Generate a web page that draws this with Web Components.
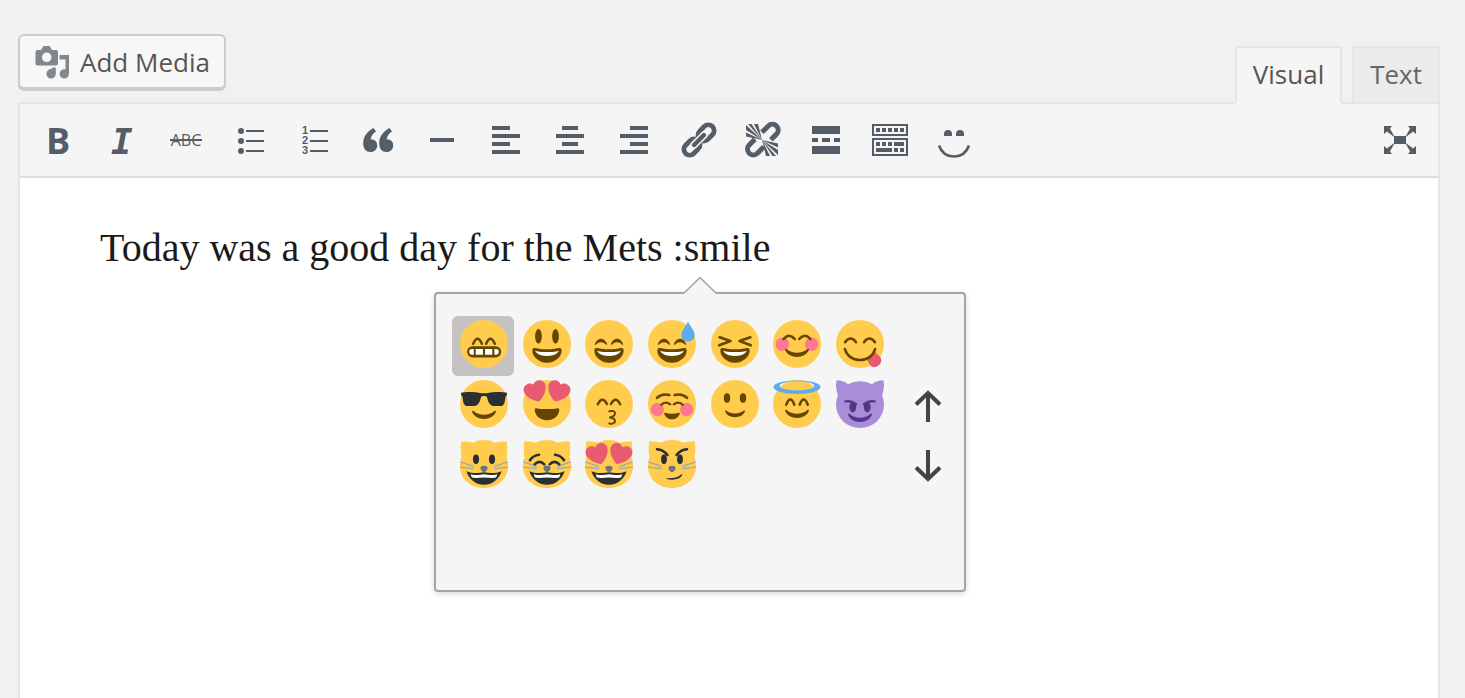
<!DOCTYPE html>
<html lang="en">
<head>
<meta charset="utf-8">
<title>Edit Post</title>
<style>
  body { margin: 0; background: #f1f1f1; font-family: "Open Sans", "Noto Sans", sans-serif; color: #555; }
</style>
</head>
<body>
<post-editor>
  <media-button slot="media">Add Media</media-button>
  <editor-tab slot="tabs" active>Visual</editor-tab>
  <editor-tab slot="tabs">Text</editor-tab>
  <editor-toolbar slot="toolbar"></editor-toolbar>
  <editor-content slot="content">Today was a good day for the Mets :smile</editor-content>
</post-editor>

<script>
function define(name, html, setup) {
  customElements.define(name, class extends HTMLElement {
    connectedCallback() {
      if (this.shadowRoot) return;
      const root = this.attachShadow({ mode: 'open' });
      root.innerHTML = typeof html === 'function' ? html(this) : html;
      if (setup) setup(root, this);
    }
  });
}

/* Toolbar icons, 40 x 40 */
const lines = (xs) => xs.map(([x, w], i) => `<path d="M${x} ${6 + i * 8}h${w}v4h-${w}z"/>`).join('');
const ray = 'M20 20L4 12.500V16.500zM20 20L4 5V10zM20 20L6 4h3.500zM20 20L12 4h4z';
const comma = 'M15.500 8l2.500 3.500C14.500 13.500 12.900 17 12.700 19.700c3.700-.6 6.500 2 6.500 5.700 0 3.800-3 6.600-6.700 6.600-4.500 0-7.300-3.500-7.300-8.500C5.200 16.500 9.500 11 15.500 8z';
const arrow = 'M4 6h8l-2 2.800L15 17.500 6.800 11.500 4 14z';
const ICONS = {
  bold: '<text x="8" y="34" font-family="Open Sans" font-weight="700" font-size="36">B</text>',
  italic: '<text x="9" y="34" font-family="DejaVu Sans Mono" font-weight="700" font-style="italic" font-size="36">I</text>',
  strike: '<text x="20" y="26" text-anchor="middle" font-family="Open Sans" font-size="16">ABC</text><path d="M4 19h32v2H4z"/>',
  bullets: '<circle cx="11" cy="11" r="3"/><circle cx="11" cy="21" r="3"/><circle cx="11" cy="31" r="3"/><path d="M16 10h18v2H16zM16 20h18v2H16zM16 30h18v2H16z"/>',
  numbers: '<g font-family="Liberation Sans" font-weight="700" font-size="11"><text x="8" y="14">1</text><text x="8" y="24">2</text><text x="8" y="34">3</text></g><path d="M16 10h18v2H16zM16 20h18v2H16zM16 30h18v2H16z"/>',
  quote: `<path d="${comma}"/><path transform="translate(16)" d="${comma}"/>`,
  rule: '<path d="M8 18h24v4H8z"/>',
  left: lines([[6, 18], [6, 28], [6, 18], [6, 28]]),
  center: lines([[12, 16], [6, 28], [12, 16], [6, 28]]),
  right: lines([[16, 18], [6, 28], [16, 18], [6, 28]]),
  link: '<g transform="translate(21 20) rotate(-45)" fill="none" stroke="currentColor" stroke-width="4.800"><rect x="1" y="-5.800" width="18" height="11.600" rx="5.800"/><rect x="-19" y="-5.800" width="18" height="11.600" rx="5.800"/><path d="M-7 0H7" stroke="#f5f5f5" stroke-width="7.500" stroke-linecap="round"/><path d="M-7 0H7" stroke-width="4.400" stroke-linecap="round"/></g>',
  unlink: `<g transform="translate(21 19) rotate(-45)" fill="none" stroke="currentColor" stroke-width="5"><path d="M4-5.500H13a5.800 5.800 0 0 1 0 11.600H5"/><path d="M-6-5.500H-14a5.800 5.800 0 0 0 0 11.600H-5"/></g><path d="${ray}"/><path transform="rotate(180 20 20)" d="${ray}"/>`,
  more: '<path d="M6 6h28v8H6zM6 18h6v4H6zM16 18h8v4h-8zM28 18h6v4h-6zM6 26h28v8H6z"/>',
  kitchen: '<path fill="none" stroke="currentColor" stroke-width="2" d="M3 5h34v10H3zM3 19h34v16H3z"/><path d="M6 8h4v4H6zM12 8h4v4h-4zM18 8h4v4h-4zM24 8h4v4h-4zM30 8h4v4h-4zM6 22h4v4H6zM12 22h4v4h-4zM18 22h4v4h-4zM24 22h10v4H24zM6 28h16v4H6zM24 28h4v4h-4zM30 28h4v4h-4z"/>',
  smile: '<path d="M10 16v-2a4 4 0 0 1 8 0v2zM22 16v-2a4 4 0 0 1 8 0v2z"/><path d="M5 25.500C7.500 32.500 13 36.500 20 36.500S32.500 32.500 35 25.500" fill="none" stroke="currentColor" stroke-width="2.600"/>',
  expand: `<path d="M14 16h12v8H14z"/><path d="${arrow}"/><path transform="matrix(-1 0 0 1 40 0)" d="${arrow}"/><path transform="matrix(1 0 0 -1 0 40)" d="${arrow}"/><path transform="matrix(-1 0 0 -1 40 40)" d="${arrow}"/>`
};

/* Emoji drawings, 36 x 36 */
const B = '#664500', D = '#292F33';
const both = s => s + `<g transform="matrix(-1 0 0 1 36 0)">${s}</g>`;
const stroke = (d, c = B, w = 1.9) => `<path d="${d}" fill="none" stroke="${c}" stroke-width="${w}" stroke-linecap="round" stroke-linejoin="round"/>`;
const fill = (d, c = B) => `<path d="${d}" fill="${c}"/>`;
const oval = (x, y, rx, ry, c = B) => `<ellipse cx="${x}" cy="${y}" rx="${rx}" ry="${ry}" fill="${c}"/>`;
const face = oval(18, 18, 18, 18, '#FFCC4D');
const grin = fill('M18 22c-3.600 0-6-.4-9-1-.7-.1-2 0-2 2 0 4 4.600 9 11 9s11-5 11-9c0-2-1.300-2.100-2-2-3 .6-5.400 1-9 1z') + fill('M9 23s3 1 9 1 9-1 9-1-2 4-9 4-9-4-9-4z', '#fff');
const lids = both(fill('M7.300 18.200C8.500 15.200 10.200 14 12 14s3.500 1.200 4.600 4c.2.6-.5.8-1 .3C14.500 17.200 13.400 16.600 12 16.600s-2.500.6-3.600 1.700c-.5.5-1.200.4-1.100-.1z'));
const crescent = (y, c = B) => fill(`M9 ${y}c0-.6.8-.8 1.200-.4 2.300 1.900 4.800 2.800 7.800 2.800s5.500-.9 7.800-2.800c.5-.4 1.300-.2 1.200.4-1.200 3.600-5 5.600-9 5.600s-7.800-2-9-5.600z`, c);
const hearts = both(fill('M16.650 3.281C15.791.85 13.126-.426 10.694.431c-1.476.52-2.521 1.711-2.928 3.104-1.191-.829-2.751-1.100-4.225-.58C1.111 3.813-.167 6.480.692 8.911c.122.344.284.663.472.958 1.951 3.582 7.588 6.100 11.001 6.131 2.637-2.167 5.446-7.665 4.718-11.677-.038-.348-.113-.698-.233-1.042z', '#E75A70'));
const catHead = fill('M1 1.200C3 1 8 1.500 10 2c2.500-1.500 5-2 8-2s5.500.5 8 2c2-.5 7-1 9-.8.8 3.800.5 7.800 0 11.800.7 2 1 4.300 1 6.500C36 29.500 28 36 18 36S0 29.500 0 19.500C0 17.300.3 15 1 13 .5 9 .2 5 1 1.200z', '#FFCC4D')
  + both(stroke('M.8 16.600L10 19.700M.2 20.300L10 21.500', '#99AAB5', 1)) + fill('M15.300 20.800c0-1 1.200-1.500 2.700-1.500s2.700.5 2.700 1.500c0 1.500-1.500 3.200-2.700 3.200s-2.700-1.700-2.700-3.200z', '#67757F');
const catGrin = fill('M4.800 23.400c3.200 1.600 9 1.800 13.200.8 4.200 1 10 .8 13.200-.8C29.500 29 24.500 33.500 18 33.500S6.500 29 4.800 23.400z', D) + fill('M8 25.600c3 .9 7 .8 10 .1 3 .7 7 .8 10-.1l-.9 2.600c-3 .7-6-.1-9.100-.1s-6.100.8-9.100.1z', '#fff');
const EMOJI = {
  'Grinning with smiling eyes': face + both(stroke('M9.900 17.800Q13.200 10.200 16.400 17.800'))
    + '<rect x="5.300" y="19.600" width="25.600" height="8.500" rx="4.200" fill="#664500"/><path fill="#fff" d="M10.300 21.800v4.200H9a2.100 2.100 0 0 1 0-4.200zM11.800 21.800h5.400v4.200h-5.400zM18.800 21.800h5.400v4.200h-5.400zM25.800 21.800h1.200a2.100 2.100 0 0 1 0 4.200h-1.200z"/>',
  'Grinning, big eyes': face + both(oval(11.6, 12.3, 2.5, 5.5)) + grin,
  'Grinning, closed eyes': face + lids + grin,
  'Grinning with sweat': face + lids + grin + fill('M30 1c.7 3 5 6.500 5 10.200a5 5 0 0 1-10 0C25 7.500 29.300 4 30 1z', '#5DADEC'),
  'Squinting': face + both(stroke('M6.500 13L14.600 15.800 6.200 19', B, 2)) + grin,
  'Blushing': face + both(oval(7, 18.2, 5, 5, '#FF7892') + stroke('M8 14.300Q12 9.300 16.300 14.200')) + crescent(22.2),
  'Savouring': face + both(stroke('M6.800 16.600Q11 11.200 15 16.600')) + fill('M22.800 29.500l6.200-5.700 4.200 4a5 5 0 0 1-6.800 6.800z', '#E75A70') + stroke('M6.700 21.800C8 27 12.500 30 18 30s10-3 11.300-8.200'),
  'Sunglasses': face + fill('M.8 9.500C4 8.800 11 8.800 15 9.700c1.800.4 4.200.4 6 0 4-.9 11-.9 14.200-.2v2l-1 .6c-.4 4-1 7.400-3.700 7.400h-5c-3.500 0-4.500-3.500-5.200-6.500-.3-1.300-4.300-1.300-4.600 0-.7 3-1.700 6.500-5.200 6.500h-5c-2.700 0-3.300-3.400-3.700-7.400l-1-.6z', D) + crescent(23.6),
  'Heart eyes': face + hearts + fill('M10 21.200c2.500.5 5 .6 8 .6s5.500-.1 8-.6c1-.1 1.300.5 1.200 1.500C26.800 27 23 30.200 18 30.200S9.200 27 8.800 22.700c-.1-1 .2-1.600 1.200-1.500z'),
  'Kissing': face + both(stroke('M9.600 18.200Q13 11.500 16.500 18')) + stroke('M18.200 23.400c2.500-.6 4.300 0 4.300 1.500 0 1.600-1.600 2.600-3.800 3.200 2.200.3 3.800 1.200 3.800 2.700 0 1.600-1.800 2.300-4.300 1.800', B, 1.5),
  'Relaxed': face + both(oval(7, 22.2, 5, 5, '#FF7892') + stroke('M6.700 13.400Q10.500 9.800 16 11.300') + stroke('M9.800 18.700Q13 15.300 16.700 18.300', B, 1.6)) + fill('M12.800 24.500c3.400 1 7 1 10.400 0 .5-.1.700.4.600.8-.7 2.500-3 4.200-5.800 4.200s-5.100-1.700-5.800-4.200c-.1-.4.1-.9.600-.8z'),
  'Smiling': face + both(oval(12, 13.5, 2.4, 3.6)) + fill('M10.500 23.500c0-.6.700-.8 1.100-.4 1.900 1.400 4 2 6.400 2s4.500-.6 6.400-2c.5-.4 1.200-.2 1.100.4-.9 2.900-4 4.400-7.500 4.400s-6.600-1.500-7.500-4.400z'),
  'Halo': face + '<path fill="#5DADEC" fill-rule="evenodd" d="M.4 5.300C.4 2.300 8 .4 18 .4s17.600 1.900 17.600 4.900-7.600 5.200-17.600 5.200S.4 8.300.4 5.300zM5 4.500c0 1.900 5.500 3.200 13 3.200s13-1.300 13-3.200S25.500 1 18 1 5 2.600 5 4.500z"/>' + both(stroke('M9.900 18.500Q13 10.800 16 18.500')) + crescent(22.9),
  'Imp': both(fill('M.5.2C3 0 6.500 1.200 9 3.200L1.500 12C.3 8-.6 3 .5.200z', '#AA8DD8')) + oval(18, 18.5, 18, 17.5, '#AA8DD8') + both(stroke('M7 16Q11.500 15.300 15 18.200', '#553788', 1.8) + oval(12.6, 20.3, 2.6, 4, '#553788')) + crescent(25.9, '#553788'),
  'Cat': catHead + both(oval(12, 14.5, 2.3, 3.6, D)) + catGrin,
  'Laughing cat': catHead + both(stroke('M5.200 15.200Q7.500 11.500 12 11', D) + stroke('M8.800 18.300Q12.300 14.500 16 18.300', D)) + catGrin,
  'Heart eyes cat': catHead + `<g transform="translate(0 2)">${hearts}</g>` + catGrin,
  'Smirking cat': catHead + both(stroke('M6.700 6.900Q11.500 7.200 14.600 11.300', D) + oval(12, 14.5, 2.2, 3.6, D)) + fill('M14 28.600c4.500.2 8.500-.3 10.800-2.800.4-.4.900-.1.700.5-1 3-6 4.200-11.500 3z', D)
};

define('tool-icon', el => `
  <style>
    :host { display: block; width: 40px; height: 40px; color: #555d66; }
    svg { display: block; overflow: visible; }
  </style>
  <svg width="40" height="40" viewBox="0 0 40 40" fill="currentColor" aria-hidden="true">${ICONS[el.getAttribute('name')]}</svg>`);

define('emoji-icon', el => `
  <style>
    :host { display: block; width: 48px; height: 48px; }
    svg { display: block; }
  </style>
  <svg width="48" height="48" viewBox="0 0 36 36" aria-hidden="true">${EMOJI[el.getAttribute('name')]}</svg>`);

define('media-button', `
  <style>
    :host { display: block; }
    button { display: flex; align-items: center; gap: 10px; height: 55px; box-sizing: border-box; padding: 0 14px; font: 26px/36px "Open Sans", "Noto Sans", sans-serif; color: #555;
      background: #f7f7f7; border: 2px solid #ccc; border-radius: 6px; box-shadow: 0 2px 0 #ccc; }
    svg { display: block; }
  </style>
  <button type="button">
    <svg width="36" height="36" viewBox="0 0 36 36" fill="#82878c" aria-hidden="true">
      <path fill-rule="evenodd" d="M9.500 2h6l2.500 4H22a2 2 0 0 1 2 2V19.500a2 2 0 0 1-2 2H3.500a2 2 0 0 1-2-2V8a2 2 0 0 1 2-2H7zM12.700 8.500a4.800 4.800 0 1 0 0 9.600 4.800 4.800 0 0 0 0-9.600z"/>
      <path d="M25.500 11H35V29.800a4.700 4.700 0 1 1-3.500-4.500V15.500h-6z"/>
      <path d="M18.500 23.500h3.300v6.300a4.700 4.700 0 1 1-4.200-4.700z"/>
    </svg>
    <span><slot></slot></span>
  </button>`);

define('editor-tab', `
  <style>
    :host { display: block; }
    button { display: block; height: 58px; box-sizing: border-box; padding: 8px 16px 10px; font: 26px/36px "Open Sans", "Noto Sans", sans-serif; color: #666;
      background: #ebebeb; border: 2px solid #e5e5e5; border-radius: 0; }
    :host([active]) button { background: #f5f5f5; color: #555; border-bottom-color: #f5f5f5; }
  </style>
  <button type="button" role="tab"><slot></slot></button>`,
  (root, el) => root.querySelector('button').setAttribute('aria-selected', el.hasAttribute('active')));

const TOOLS = [['bold', 'Bold'], ['italic', 'Italic'], ['strike', 'Strikethrough'], ['bullets', 'Bulleted list'], ['numbers', 'Numbered list'], ['quote', 'Blockquote'], ['rule', 'Horizontal line'], ['left', 'Align left'], ['center', 'Align center'], ['right', 'Align right'], ['link', 'Insert link'], ['unlink', 'Remove link'], ['more', 'Read more'], ['kitchen', 'Toolbar toggle'], ['smile', 'Emoji'], ['expand', 'Full screen']];
define('editor-toolbar', `
  <style>
    :host { display: flex; gap: 24px; padding: 16px 18px; background: #f5f5f5; border-bottom: 2px solid #ddd; }
    button { display: block; padding: 0; border: 0; background: none; }
    button:last-of-type { margin-left: auto; }
  </style>` + TOOLS.map(([n, l]) => `<button type="button" aria-label="${l}"><tool-icon name="${n}"></tool-icon></button>`).join(''));

define('emoji-picker', `
  <style>
    :host { display: flex; box-sizing: border-box; width: 532px; height: 300px; padding: 22px 0 0 16px; background: #f5f5f5; border: 2px solid #a0a5aa; border-radius: 4px; box-shadow: 0 2px 6px rgba(0,0,0,.15); }
    .tip { position: absolute; left: 246px; top: -18px; }
    .grid { display: grid; grid-template-columns: repeat(7, 62px); grid-auto-rows: 60px; justify-content: space-between; align-content: start; width: 438px; }
    .grid button { padding: 4px 6px 8px 8px; border: 0; border-radius: 6px; background: none; }
    .grid button[aria-pressed=true] { background: #c4c3c2; }
    .pager { display: grid; grid-auto-rows: 60px; align-content: start; flex: 1; padding: 60px 0 0 2px; }
    .pager button { display: grid; place-items: center; padding: 0; border: 0; background: none; }
    svg { display: block; }
  </style>
  <svg class="tip" width="36" height="18" viewBox="0 0 36 18" aria-hidden="true"><path d="M1 18L18 1.500 35 18z" fill="#f5f5f5"/><path d="M1.500 17.500L18 1.500 34.500 17.500" fill="none" stroke="#a0a5aa" stroke-width="1.500"/></svg>
  <div class="grid">${Object.keys(EMOJI).map((n, i) => `<button type="button" aria-label="${n}" aria-pressed="${i === 0}"><emoji-icon name="${n}"></emoji-icon></button>`).join('')}</div>
  <div class="pager">
    <button type="button" aria-label="Previous"><svg width="32" height="32" viewBox="0 0 32 32" fill="none" stroke="#444" stroke-width="4"><path d="M16 3v29M4 14.500L16 3l12 11.500"/></svg></button>
    <button type="button" aria-label="Next"><svg width="32" height="32" viewBox="0 0 32 32" fill="none" stroke="#444" stroke-width="4"><path d="M16 29V0M4 17.500L16 29l12-11.500"/></svg></button>
  </div>`);

define('editor-content', `
  <style>
    :host { display: block; position: relative; flex: 1; background: #fff; }
    .text { padding: 44px 80px; font: 40px/52px "Liberation Serif", serif; color: #1a1a1a; outline: 0; }
    emoji-picker { position: absolute; left: 414px; top: 114px; }
  </style>
  <div class="text" role="textbox" aria-label="Post content" contenteditable="true" spellcheck="false"><slot></slot></div>
  <emoji-picker></emoji-picker>`);

define('post-editor', `
  <style>
    :host { display: flex; flex-direction: column; box-sizing: border-box; min-height: 100vh; padding: 34px 25px 0 18px; }
    header { display: flex; justify-content: space-between; align-items: flex-start; }
    .tabs { display: flex; gap: 10px; padding-top: 12px; margin-bottom: -2px; position: relative; }
    .panel { display: flex; flex-direction: column; flex: 1; border: 2px solid #e5e5e5; border-bottom: 0; }
  </style>
  <header>
    <slot name="media"></slot>
    <div class="tabs" role="tablist"><slot name="tabs"></slot></div>
  </header>
  <section class="panel"><slot name="toolbar"></slot><slot name="content"></slot></section>`);
</script>
</body>
</html>
